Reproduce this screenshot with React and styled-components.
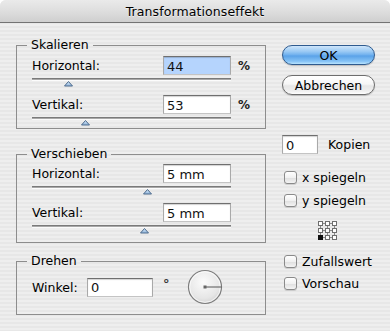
import React from 'react'
import styled, { createGlobalStyle } from 'styled-components'

const GlobalStyle = createGlobalStyle`
  html, body {
    margin: 0;
    padding: 0;
    background: #fff;
  }
  body {
    font-family: "DejaVu Sans", "Noto Sans", sans-serif;
    font-size: 12.5px;
    color: #000;
  }
`

const Window = styled.div`
  width: 390px;
  height: 331px;
  overflow: hidden;
  border-radius: 6px 6px 0 0;
  background: repeating-linear-gradient(
    180deg,
    #eeeeee 0px,
    #eeeeee 2px,
    #e7e7e7 2px,
    #e7e7e7 4px
  );
  display: flex;
  flex-direction: column;
`

const TitleBar = styled.div`
  height: 22px;
  flex: 0 0 22px;
  border-bottom: 1px solid #737373;
  background: linear-gradient(180deg, #eaeaea 0%, #dedede 50%, #cfcfcf 100%);
  display: flex;
  align-items: center;
  justify-content: center;
  font-size: 12.5px;
  color: #000;
  text-shadow: 0 1px 0 rgba(255, 255, 255, 0.6);
  letter-spacing: 0.1px;
`

const Body = styled.div`
  display: flex;
  padding: 15px 0 0 16px;
`

const LeftColumn = styled.div`
  width: 250px;
  display: flex;
  flex-direction: column;
`

const Group = styled.fieldset`
  margin: ${({ $mt }) => $mt || 0}px 0 0 0;
  width: 250px;
  box-sizing: border-box;
  border: 1px solid #8d8d8d;
  padding: ${({ $pt }) => $pt}px 13px ${({ $pb }) => $pb}px 15px;
  min-width: 0;
`

const Legend = styled.legend`
  padding: 0 4px;
  margin-left: -5px;
  line-height: 14px;
  font-size: 12.5px;
  color: #000;
`

const Field = styled.div`
  display: flex;
  flex-direction: column;
  margin-top: ${({ $mt }) => $mt || 0}px;
`

const Line = styled.div`
  display: flex;
  align-items: center;
  height: 19px;
`

const Label = styled.span`
  flex: 0 0 ${({ $w }) => $w}px;
  white-space: nowrap;
`

const TextBox = styled.input`
  box-sizing: border-box;
  width: ${({ $w }) => $w}px;
  height: 19px;
  margin: 0;
  padding: 1px 3px 0 3px;
  border: 1px solid;
  border-color: #6f6f6f #a9a9a9 #c4c4c4 #a9a9a9;
  box-shadow: inset 0 1px 1px rgba(0, 0, 0, 0.18);
  background: ${({ $selected }) => ($selected ? '#b5d4fd' : '#fff')};
  font-family: "DejaVu Sans", sans-serif;
  font-size: 13px;
  color: #111;
  outline: none;
`

const Unit = styled.span`
  margin-left: 7px;
  font-size: 12px;
  font-weight: bold;
  color: #222;
`

const Degree = styled.span`
  margin: -8px 0 0 10px;
  font-size: 13px;
  font-weight: bold;
  color: #333;
`

const Track = styled.div`
  position: relative;
  width: 199px;
  height: 2px;
  margin-top: 3px;
  margin-bottom: 6px;
  background: linear-gradient(180deg, #7a7a7a 0 1px, #a8a8a8 1px 2px);
  box-shadow: 0 1px 0 rgba(255, 255, 255, 0.8);
`

const Thumb = styled.svg`
  position: absolute;
  top: 3px;
  left: ${({ $pos }) => $pos - 4.5}px;
`

const RotateRow = styled.div`
  display: flex;
  align-items: center;
  height: 34px;
`

const Dial = styled.svg`
  margin-left: 17px;
`

const RightColumn = styled.div`
  display: flex;
  flex-direction: column;
  align-items: flex-start;
  margin-left: 16px;
  padding-top: 7px;
`

const PillButton = styled.button`
  box-sizing: border-box;
  width: 93px;
  height: 20px;
  margin: ${({ $mt }) => $mt || 0}px 0 0 0;
  padding: 0;
  border-radius: 10px;
  font-family: "DejaVu Sans", sans-serif;
  font-size: 12.5px;
  color: #000;
  border: 1px solid ${({ $primary }) => ($primary ? '#2f5b8f' : '#6d6d6d')};
  background: ${({ $primary }) =>
    $primary
      ? 'linear-gradient(180deg, #cfe6fb 0%, #9bcaf4 30%, #6fb0ee 50%, #5aa2e8 55%, #86c3f6 85%, #b8e4ff 100%)'
      : 'linear-gradient(180deg, #ffffff 0%, #f6f6f6 45%, #e6e6e6 55%, #f0f0f0 85%, #ffffff 100%)'};
  box-shadow: 0 1px 1px rgba(0, 0, 0, 0.2);
`

const CopyRow = styled.div`
  display: flex;
  align-items: center;
  margin-top: 40px;
  gap: 10px;
`

const CheckRow = styled.label`
  display: flex;
  align-items: center;
  gap: 5px;
  height: 13px;
  margin: ${({ $mt }) => $mt}px 0 0 2px;
  white-space: nowrap;
`

const CheckBox = styled.span`
  box-sizing: border-box;
  width: 13px;
  height: 13px;
  border-radius: 3px;
  border: 1px solid #8a8a8a;
  background: linear-gradient(180deg, #ffffff 0%, #f1f1f1 50%, #e0e0e0 55%, #f4f4f4 100%);
  box-shadow: 0 1px 0 rgba(0, 0, 0, 0.12);
`

const Proxy = styled.svg`
  margin: 14px 0 0 36px;
  display: block;
`

function Slider({ label, value, pos, selected, mt }) {
  return (
    <Field $mt={mt}>
      <Line>
        <Label $w={131}>{label}</Label>
        <TextBox $w={68} $selected={selected} defaultValue={value} readOnly />
        {value.indexOf('mm') < 0 && <Unit>%</Unit>}
      </Line>
      <Track>
        <Thumb $pos={pos} width="9" height="6" viewBox="0 0 9 6">
          <defs>
            <linearGradient id="th" x1="0" y1="0" x2="0" y2="1">
              <stop offset="0" stopColor="#d8e8f8" />
              <stop offset="1" stopColor="#8fb5dc" />
            </linearGradient>
          </defs>
          <polygon points="4.5,0.5 8.5,5 0.5,5" fill="url(#th)" stroke="#4d6b8c" strokeWidth="1" />
        </Thumb>
      </Track>
    </Field>
  )
}

function ProxyGrid() {
  const cells = []
  for (let r = 0; r < 3; r++) {
    for (let c = 0; c < 3; c++) {
      const x = c * 7 + 0.5
      const y = r * 7 + 0.5
      const on = r === 2 && c === 0
      cells.push(
        <rect key={r + '-' + c} x={x} y={y} width="4" height="4"
          fill={on ? '#111' : '#fff'} stroke={on ? '#111' : '#6e6e6e'} />
      )
    }
  }
  return (
    <Proxy width="19" height="19" viewBox="0 0 19 19">
      <g stroke="#8a8a8a">
        <line x1="4.5" y1="2.5" x2="7.5" y2="2.5" />
        <line x1="11.5" y1="2.5" x2="14.5" y2="2.5" />
        <line x1="4.5" y1="9.5" x2="7.5" y2="9.5" />
        <line x1="11.5" y1="9.5" x2="14.5" y2="9.5" />
        <line x1="4.5" y1="16.5" x2="7.5" y2="16.5" />
        <line x1="11.5" y1="16.5" x2="14.5" y2="16.5" />
        <line x1="2.5" y1="4.5" x2="2.5" y2="7.5" />
        <line x1="2.5" y1="11.5" x2="2.5" y2="14.5" />
        <line x1="9.5" y1="4.5" x2="9.5" y2="7.5" />
        <line x1="9.5" y1="11.5" x2="9.5" y2="14.5" />
        <line x1="16.5" y1="4.5" x2="16.5" y2="7.5" />
        <line x1="16.5" y1="11.5" x2="16.5" y2="14.5" />
      </g>
      {cells}
    </Proxy>
  )
}

export default function App() {
  return (
    <Window>
      <GlobalStyle />
      <TitleBar>Transformationseffekt</TitleBar>
      <Body>
        <LeftColumn>
          <Group $pt={4} $pb={3}>
            <Legend>Skalieren</Legend>
            <Slider label="Horizontal:" value="44" pos={36} selected />
            <Slider label="Vertikal:" value="53" pos={53} mt={9} />
          </Group>

          <Group $mt={18} $pt={3} $pb={9}>
            <Legend>Verschieben</Legend>
            <Slider label="Horizontal:" value="5 mm" pos={115} />
            <Slider label="Vertikal:" value="5 mm" pos={112} mt={9} />
          </Group>

          <Group $mt={11} $pt={2} $pb={10}>
            <Legend>Drehen</Legend>
            <RotateRow>
              <Label $w={55}>Winkel:</Label>
              <TextBox $w={66} defaultValue="0" readOnly />
              <Degree>°</Degree>
              <Dial width="36" height="36" viewBox="0 0 36 36">
                <defs>
                  <radialGradient id="dialFill" cx="0.45" cy="0.35" r="0.7">
                    <stop offset="0" stopColor="#fbfbfb" />
                    <stop offset="0.7" stopColor="#e6e6e6" />
                    <stop offset="1" stopColor="#cfcfcf" />
                  </radialGradient>
                </defs>
                <circle cx="18" cy="18" r="16.5" fill="url(#dialFill)" stroke="#7d7d7d" strokeWidth="1.2" />
                <circle cx="18" cy="18" r="15.3" fill="none" stroke="#ffffff" strokeOpacity="0.7" />
                <line x1="18" y1="18" x2="34.5" y2="18" stroke="#555" strokeWidth="1" />
                <rect x="16.5" y="16.5" width="3" height="3" fill="#666" />
              </Dial>
            </RotateRow>
          </Group>
        </LeftColumn>

        <RightColumn>
          <PillButton $primary>OK</PillButton>
          <PillButton $mt={10}>Abbrechen</PillButton>

          <CopyRow>
            <TextBox $w={36} defaultValue="0" readOnly />
            <span>Kopien</span>
          </CopyRow>

          <CheckRow $mt={17}>
            <CheckBox />
            x spiegeln
          </CheckRow>
          <CheckRow $mt={10}>
            <CheckBox />
            y spiegeln
          </CheckRow>

          <ProxyGrid />

          <CheckRow $mt={15}>
            <CheckBox />
            Zufallswert
          </CheckRow>
          <CheckRow $mt={9}>
            <CheckBox />
            Vorschau
          </CheckRow>
        </RightColumn>
      </Body>
    </Window>
  )
}
